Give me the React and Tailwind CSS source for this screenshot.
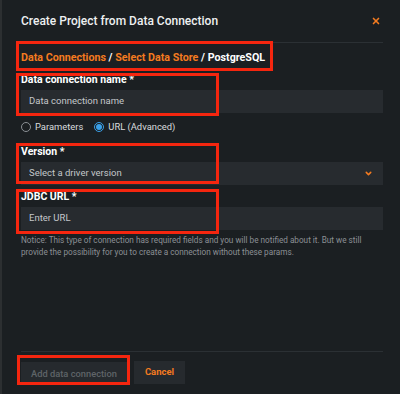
import React from 'react';
import { X, ChevronDown } from 'lucide-react';

// red annotation frame laid over a block
const Mark = ({ className }) => (
  <div className={`pointer-events-none absolute border-[3px] border-[#f5260f] ${className}`}></div>
);

const Field = ({ label, children }) => (
  <div className="flex flex-col">
    <label className="text-[10.5px] font-bold leading-[14px] text-white">{label}</label>
    <div className="mt-[3px]">{children}</div>
  </div>
);

const App = () => {
  return (
    <div
      className="relative h-[394px] w-[400px] overflow-hidden border-l-2 border-[#2c2f31] bg-[#1b1f22] text-white"
      style={{ fontFamily: 'Roboto, "Liberation Sans", sans-serif' }}
    >
      <div className="flex h-full flex-col pl-[19px] pr-[17px]">
        {/* Header */}
        <div className="flex h-[43px] items-center justify-between border-b border-[#2b3034]">
          <h1 className="text-[12px] font-medium text-[#eef0f1]">Create Project from Data Connection</h1>
          <X className="mr-[2px] h-[10px] w-[10px] text-[#f47b20]" strokeWidth={4} />
        </div>

        {/* Breadcrumbs */}
        <div className="relative flex h-[30px] items-center whitespace-pre text-[10.7px] font-bold">
          <span className="text-[#f47b20]">Data Connections</span>
          <span className="text-white"> / </span>
          <span className="text-[#f47b20]">Select Data Store</span>
          <span className="text-white"> / PostgreSQL</span>
          <Mark className="-left-[5px] -top-[2px] h-[30px] w-[257px]" />
        </div>

        <div className="flex flex-col">
          <div className="relative">
            <Field label="Data connection name *">
              <div className="flex h-[23px] items-center bg-[#272b2f] px-[8px] text-[9.5px] text-[#c4c7ca]">
                Data connection name
              </div>
            </Field>
            <Mark className="-left-[5px] top-0 h-[43px] w-[203px]" />
          </div>

          {/* Radio row */}
          <div className="mt-[6px] flex h-[16px] items-center gap-[11px] text-[9.4px] text-[#d9dcde]">
            <label className="flex items-center gap-[4px]">
              <span className="h-[10px] w-[10px] rounded-full border border-[#8a8f94]"></span>
              <span>Parameters</span>
            </label>
            <label className="flex items-center gap-[4px]">
              <span className="flex h-[10px] w-[10px] items-center justify-center rounded-full border border-[#3aa0e8]">
                <span className="h-[6px] w-[6px] rounded-full bg-[#3aa0e8]"></span>
              </span>
              <span>URL (Advanced)</span>
            </label>
          </div>

          <div className="relative mt-[10px]">
            <Field label="Version *">
              <div className="flex h-[23px] items-center justify-between bg-[#272b2f] pl-[8px] pr-[10px] text-[9.5px] text-[#c4c7ca]">
                <span>Select a driver version</span>
                <ChevronDown className="h-[9px] w-[9px] text-[#f47b20]" strokeWidth={4} />
              </div>
            </Field>
            <Mark className="-left-[5px] -top-[2px] h-[41px] w-[203px]" />
          </div>

          <div className="relative mt-[5px]">
            <Field label="JDBC URL *">
              <div className="flex h-[23px] items-center bg-[#272b2f] px-[8px] text-[9.5px] text-[#c4c7ca]">
                Enter URL
              </div>
            </Field>
            <Mark className="-left-[5px] -top-[1px] h-[45px] w-[203px]" />
          </div>

          <p className="mt-[4px] text-[8.2px] leading-[12px] text-[#8b9095]">
            Notice: This type of connection has required fields and you will be notified about it. But we still provide the possibility for you to create a connection without these params.
          </p>
        </div>

        {/* Footer */}
        <div className="mt-auto mb-[9px] flex items-center gap-[7px] border-t border-[#2b3034] pt-[8px]">
          <div className="relative">
            <button className="h-[23px] w-[106px] bg-[#262a2e] text-[9.3px] font-medium text-[#5f6468]">
              Add data connection
            </button>
            <Mark className="-left-[4px] -top-[5px] h-[30px] w-[113px]" />
          </div>
          <button className="h-[23px] w-[51px] bg-[#262a2e] text-[9.5px] font-bold text-[#f47b20]">
            Cancel
          </button>
        </div>
      </div>
    </div>
  );
};

export default App;
